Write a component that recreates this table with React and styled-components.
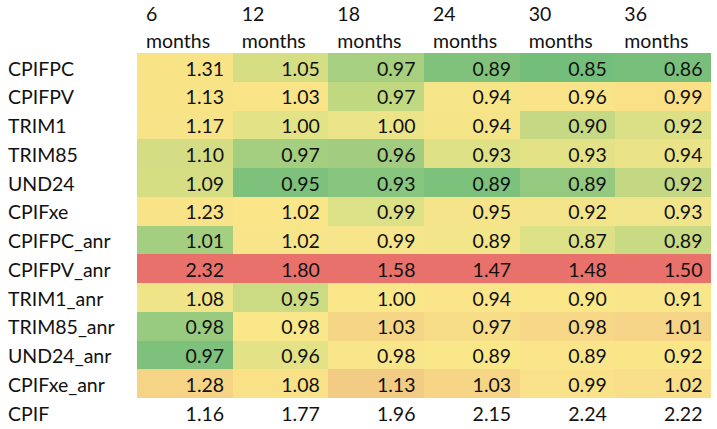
import React from "react";
import styled, { createGlobalStyle } from "styled-components";

const Global = createGlobalStyle`
  html, body { margin: 0; padding: 0; background: #ffffff; }
  body { font-family: Lato, "Liberation Sans", sans-serif; color: #111; }
`;

const Table = styled.div`
  display: grid;
  grid-template-columns: 137px repeat(6, 1fr);
  grid-template-rows: 53px repeat(13, 28.75px);
  width: 711px;
  font-size: 19.5px;
`;

const HeadCell = styled.div`
  padding: 1px 0 0 9px;
  line-height: 26.5px;
  white-space: pre-line;
`;

const Label = styled.div`
  display: flex;
  align-items: center;
  padding: 1.5px 0 0 8px;
`;

const Cell = styled.div`
  display: flex;
  align-items: center;
  justify-content: flex-end;
  padding: 1.5px 8.5px 0 0;
  background: ${(p) => p.$bg || "transparent"};
`;

const months = [6, 12, 18, 24, 30, 36];

const R = "#e8716b";

const rows = [
  ["CPIFPC", ["1.31", "#f9e387"], ["1.05", "#d5de83"], ["0.97", "#a6cf7f"], ["0.89", "#80c27c"], ["0.85", "#74be7b"], ["0.86", "#79bf7c"]],
  ["CPIFPV", ["1.13", "#f8e387"], ["1.03", "#f9e487"], ["0.97", "#c0d981"], ["0.94", "#f6e589"], ["0.96", "#f9e489"], ["0.99", "#fae087"]],
  ["TRIM1", ["1.17", "#f8e488"], ["1.00", "#e2e386"], ["1.00", "#ece488"], ["0.94", "#f6e489"], ["0.90", "#c5d984"], ["0.92", "#dbe086"]],
  ["TRIM85", ["1.10", "#d4dd84"], ["0.97", "#a4ce80"], ["0.96", "#a2cd80"], ["0.93", "#dfe187"], ["0.93", "#e4e287"], ["0.94", "#ebe388"]],
  ["UND24", ["1.09", "#d6de84"], ["0.95", "#7ec17d"], ["0.93", "#88c57e"], ["0.89", "#7cc17c"], ["0.89", "#94c97f"], ["0.92", "#c4d883"]],
  ["CPIFxe", ["1.23", "#f9e388"], ["1.02", "#fae589"], ["0.99", "#dce086"], ["0.95", "#f6e48a"], ["0.92", "#f3e48a"], ["0.93", "#f2e48a"]],
  ["CPIFPC_anr", ["1.01", "#a5cf80"], ["1.02", "#f8e58a"], ["0.99", "#f6e58a"], ["0.89", "#f3e58a"], ["0.87", "#dce087"], ["0.89", "#c9da85"]],
  ["CPIFPV_anr", ["2.32", R], ["1.80", R], ["1.58", R], ["1.47", R], ["1.48", R], ["1.50", R]],
  ["TRIM1_anr", ["1.08", "#f0e488"], ["0.95", "#cadb84"], ["1.00", "#fae78a"], ["0.94", "#fae58a"], ["0.90", "#fae78a"], ["0.91", "#f9e68a"]],
  ["TRIM85_anr", ["0.98", "#98cb7f"], ["0.98", "#fae78a"], ["1.03", "#f5d687"], ["0.97", "#f8dd89"], ["0.98", "#f6d888"], ["1.01", "#f5d487"]],
  ["UND24_anr", ["0.97", "#7ec17c"], ["0.96", "#e3e287"], ["0.98", "#fae68a"], ["0.89", "#fae78a"], ["0.89", "#fae58a"], ["0.92", "#f9e689"]],
  ["CPIFxe_anr", ["1.28", "#f6d486"], ["1.08", "#f9e188"], ["1.13", "#f2cb85"], ["1.03", "#f6d587"], ["0.99", "#f9e289"], ["1.02", "#f9df89"]],
  ["CPIF", ["1.16"], ["1.77"], ["1.96"], ["2.15"], ["2.24"], ["2.22"]],
];

export default function App() {
  return (
    <>
      <Global />
      <Table>
        <div />
        {months.map((m) => (
          <HeadCell key={m}>{`${m}\nmonths`}</HeadCell>
        ))}
        {rows.map(([name, ...cells]) => (
          <React.Fragment key={name}>
            <Label>{name}</Label>
            {cells.map(([v, bg], i) => (
              <Cell key={i} $bg={bg}>
                {v}
              </Cell>
            ))}
          </React.Fragment>
        ))}
      </Table>
    </>
  );
}
